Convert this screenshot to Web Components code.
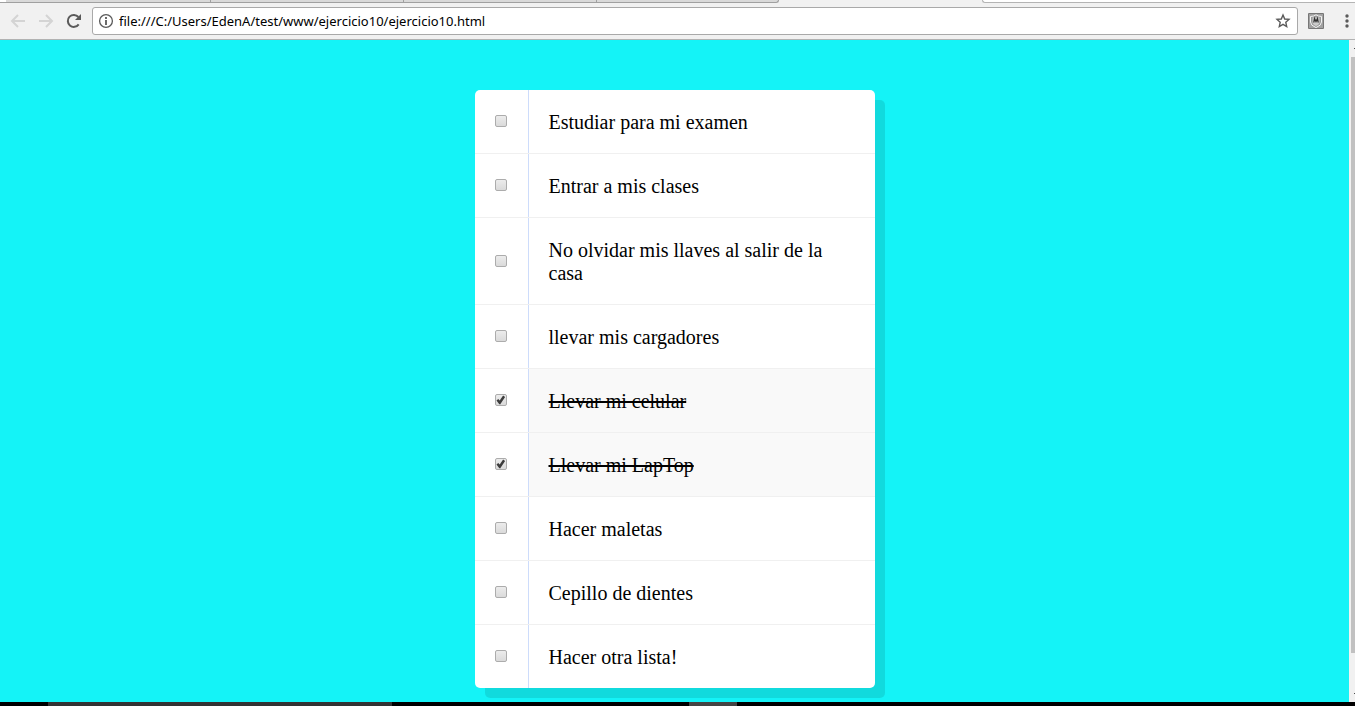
<!DOCTYPE html>
<html lang="es">
<head>
<meta charset="utf-8">
<title>ejercicio10</title>
<style>
  body { margin: 0; background: #14f3f7; }
</style>
</head>
<body>
<browser-window>
  <tab-strip slot="tabs"></tab-strip>
  <browser-toolbar slot="toolbar" url="file:///C:/Users/EdenA/test/www/ejercicio10/ejercicio10.html"></browser-toolbar>
  <todo-list>
    <todo-item>Estudiar para mi examen</todo-item>
    <todo-item>Entrar a mis clases</todo-item>
    <todo-item>No olvidar mis llaves al salir de la casa</todo-item>
    <todo-item>llevar mis cargadores</todo-item>
    <todo-item checked>Llevar mi celular</todo-item>
    <todo-item checked>Llevar mi LapTop</todo-item>
    <todo-item>Hacer maletas</todo-item>
    <todo-item>Cepillo de dientes</todo-item>
    <todo-item>Hacer otra lista!</todo-item>
  </todo-list>
  <page-scrollbar slot="scrollbar"></page-scrollbar>
  <task-bar slot="taskbar"></task-bar>
</browser-window>

<script>
  const define = (name, html, setup) => customElements.define(name, class extends HTMLElement {
    connectedCallback() {
      if (this.shadowRoot) return;
      const root = this.attachShadow({ mode: 'open' });
      root.innerHTML = html;
      if (setup) setup(root, this);
    }
  });

  define('browser-window', `
    <style>
      :host { display: flex; flex-direction: column; min-height: 100vh; }
      .view { flex: 1; display: flex; }
      main { flex: 1; min-width: 0; padding: 50px 0 14px; box-sizing: border-box; background: #14f3f7; }
    </style>
    <slot name="tabs"></slot>
    <slot name="toolbar"></slot>
    <div class="view">
      <main><slot></slot></main>
      <slot name="scrollbar"></slot>
    </div>
    <slot name="taskbar"></slot>`);

  define('tab-strip', `
    <style>
      :host { display: flex; height: 3px; background: #f1f1f1; overflow: hidden; }
      div { box-sizing: border-box; border-bottom: 1px solid #a0a0a0; background: #d9d9d9; }
      .edge { width: 6px; background: #fff; }
      .tab { width: 193px; border-right: 1px solid #a0a0a0; }
      .first { width: 205px; }
      .last { width: 182px; border-radius: 0 0 3px 0; }
      .rest { flex: 1; margin-left: 203px; background: #fff; border-left: 1px solid #b4b4b4; border-bottom-color: #b4b4b4; border-radius: 0 0 0 3px; }
    </style>
    <div class="edge"></div>
    <div class="tab first"></div><div class="tab"></div><div class="tab"></div><div class="tab last"></div>
    <div class="rest"></div>`);

  define('browser-toolbar', `
    <style>
      :host { display: flex; align-items: center; height: 37px; box-sizing: border-box; padding: 0 0 1px 4px; background: #f1f1f1; border-bottom: 1px solid #b2b2b2; overflow: hidden; }
      button { flex: none; width: 28px; height: 28px; padding: 0; border: 0; background: none; display: grid; place-items: center; color: #5a5a5a; }
      button:disabled { color: #d4d4d4; }
      svg { display: block; }
      .box { flex: 1; min-width: 0; height: 28px; box-sizing: border-box; margin: 0 4px; display: flex; align-items: center; padding-left: 5px; border: 1px solid #a9a9a9; border-radius: 3px; background: #fff; }
      .info { flex: none; width: 16px; height: 16px; }
      input { flex: 1; min-width: 0; height: 26px; margin: 0 0 0 5px; padding: 0; border: 0; outline: 0; background: none; color: #000; font: 13px "Noto Sans", "Open Sans", sans-serif; }
      .menu { width: 16px; margin-left: 9px; }
    </style>
    <button disabled aria-label="Atrás"><svg width="16" height="16" fill="none" stroke="currentColor" stroke-width="2"><path d="M15 8H2M8 2L2 8l6 6"/></svg></button>
    <button disabled aria-label="Adelante"><svg width="16" height="16" fill="none" stroke="currentColor" stroke-width="2"><path d="M1 8h13M8 2l6 6-6 6"/></svg></button>
    <button aria-label="Recargar"><svg width="16" height="16" fill="none"><path d="M12.7 11.4A6 6 0 1 1 12.4 4" stroke="currentColor" stroke-width="2"/><path d="M15 1v6H9z" fill="currentColor"/></svg></button>
    <div class="box">
      <button class="info" aria-label="Información"><svg width="16" height="16" fill="none" stroke="currentColor"><circle cx="8" cy="8" r="6.4" stroke-width="1.3"/><path d="M8 7v5M8 4v2" stroke-width="1.8"/></svg></button>
      <input type="text" aria-label="Dirección" spellcheck="false">
      <button aria-label="Favorito"><svg width="16" height="16" fill="none" stroke="currentColor" stroke-width="1.4"><path d="M8 2l1.7 4 4.3.4-3.2 2.9.9 4.3L8 11.4l-3.7 2.2.9-4.3L2 6.4 6.3 6z"/></svg></button>
    </div>
    <button aria-label="Extensión"><svg width="16" height="16"><rect width="16" height="16" rx="1" fill="#777"/><path d="M1 1h14v14H1z" fill="#a2a2a2"/><path d="M2.5 3.5Q6 3.4 8 1.8q2 1.6 5.5 1.7V9q0 3.500-5.500 5.600Q2.500 12.500 2.500 9z" fill="#999" stroke="#f4f4f4"/><path d="M4.500 4.500h7V9q0 2.500-3.500 4-3.500-1.500-3.500-4z" fill="#ccc"/><path d="M5.800 9.500l.7-4L8 8.500l1.500-3 .7 4" stroke="#333" stroke-width="1.300" fill="none"/></svg></button>
    <button class="menu" aria-label="Menú"><svg width="16" height="16" fill="currentColor"><circle cx="8" cy="3" r="1.700"/><circle cx="8" cy="8" r="1.700"/><circle cx="8" cy="13" r="1.700"/></svg></button>`,
    (root, host) => { root.querySelector('input').value = host.getAttribute('url'); });

  define('todo-list', `
    <style>
      :host { display: block; width: 400px; max-width: 100%; margin: 0 auto; background: #fff; border-radius: 5px; box-shadow: 10px 10px 0 rgba(0, 0, 0, .1); overflow: hidden; font: 20px/23px "Liberation Serif", "Times New Roman", serif; color: #000; }
      ::slotted(:not(:last-child)) { border-bottom: 1px solid #f0f0f0; }
    </style>
    <slot></slot>`,
    (root, host) => host.setAttribute('role', 'list'));

  define('todo-item', `
    <style>
      :host { display: flex; }
      .tick { flex: none; width: 54px; display: grid; place-items: center start; padding: 0 0 1px 20px; box-sizing: border-box; border-right: 1px solid #cddcfb; }
      input { appearance: none; box-sizing: border-box; width: 12px; height: 12px; margin: 0; border: 1px solid #acacac; border-radius: 2px; background: linear-gradient(#ececec, #dadada); }
      input:checked::before { content: ""; display: block; width: 10px; height: 10px; background: #3c3c3c; clip-path: polygon(10% 55%, 27% 40%, 42% 56%, 76% 6%, 96% 20%, 46% 94%, 36% 90%); }
      label { flex: 1; min-width: 0; padding: 21px 20px 19px; }
      .tick:has(:checked) + label { background: #f9f9f9; text-decoration: line-through 2px; }
    </style>
    <div class="tick"><input type="checkbox" id="done"></div>
    <label for="done"><slot></slot></label>`,
    (root, host) => {
      host.setAttribute('role', 'listitem');
      root.querySelector('input').checked = host.hasAttribute('checked');
    });

  define('page-scrollbar', `
    <style>
      :host { flex: none; display: flex; flex-direction: column; width: 6px; box-sizing: border-box; padding-left: 2px; background: #f1f1f1; }
      .arrow { flex: none; height: 17px; display: flex; justify-content: flex-end; align-items: center; }
      .arrow::before { content: ""; width: 1px; height: 1px; background: #505050; }
      .thumb { flex: 1; background: #c1c1c1; }
      .track { height: 32px; }
    </style>
    <div class="arrow"></div><div class="thumb"></div><div class="track"></div><div class="arrow"></div>`);

  define('task-bar', `
    <style>
      :host { display: flex; height: 4px; background: #000; }
      .search { width: 344px; margin-left: 48px; background: #333; }
      .app { width: 48px; margin-left: 297px; background: #444; }
    </style>
    <div class="search"></div><div class="app"></div>`);
</script>
</body>
</html>
